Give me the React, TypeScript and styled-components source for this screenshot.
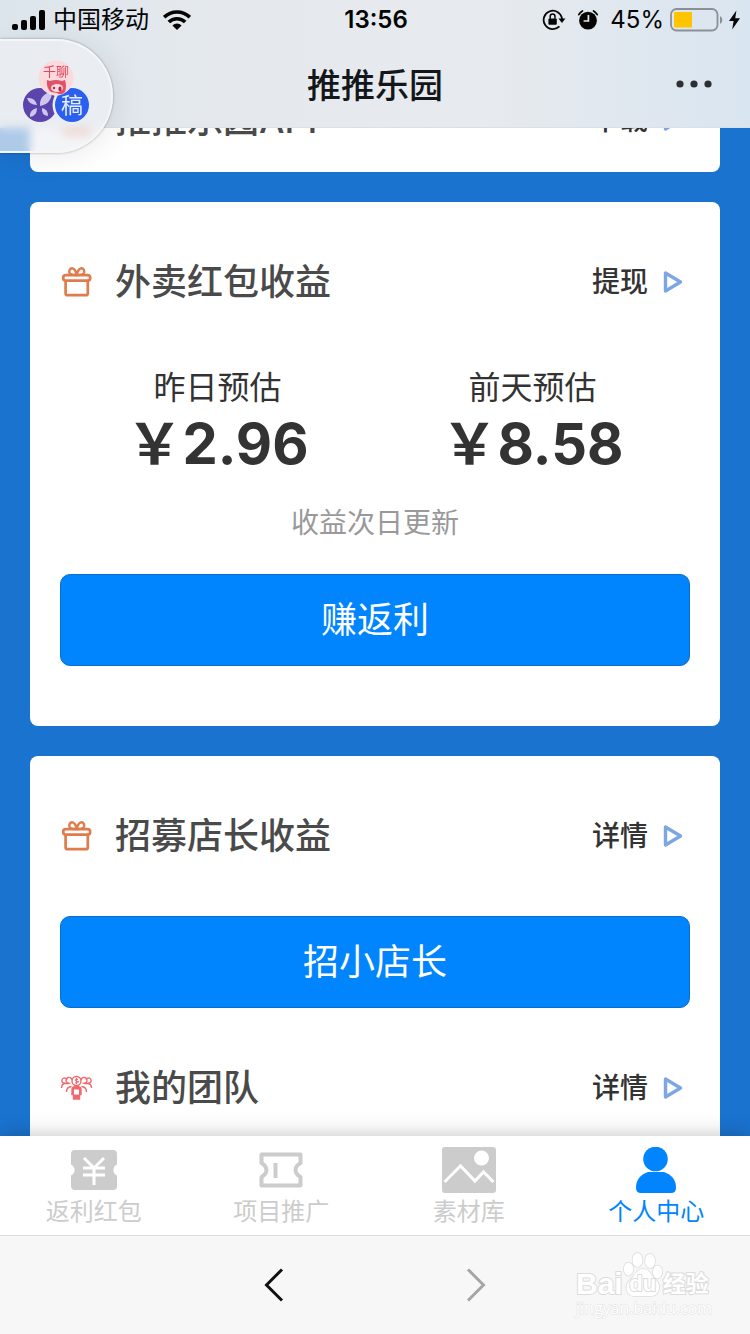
import React from 'react';
import styled, { createGlobalStyle } from 'styled-components';

const latin = '"Inter", "Noto Sans CJK SC", sans-serif';
const cjk = '"Noto Sans CJK SC", sans-serif';

const GlobalStyle = createGlobalStyle`
  *, *::before, *::after { box-sizing: border-box; }
  body { margin: 0; font-family: ${latin}; color: #333; background: #f7f7f7; }
  button { font: inherit; border: 0; padding: 0; background: none; cursor: pointer; }
  a { color: inherit; text-decoration: none; }
  h1, h2, p, dl, dt, dd { margin: 0; font-weight: inherit; }
  svg { display: block; flex: none; }
`;

const Screen = styled.div`
  position: relative;
  display: flex;
  flex-direction: column;
  height: 100vh;
  overflow: hidden;
`;

const Header = styled.header`
  flex: none;
  border-bottom: 1px solid #dcdfe3;
  background: linear-gradient(90deg, #dce5ec 0%, #e5e9ed 30%, #e7eaee 65%, #d9e5f0 100%);
`;

const StatusBar = styled.div`
  display: grid;
  grid-template-columns: 1fr auto 1fr;
  align-items: center;
  height: 40px;
  padding: 0 10px 0 12px;
  font-size: 24px;
  line-height: 40px;
  color: #050505;
`;

const StatusGroup = styled.div<{ $end?: boolean; $gap: number }>`
  display: flex;
  align-items: center;
  justify-content: ${p => (p.$end ? 'flex-end' : 'flex-start')};
  gap: ${p => p.$gap}px;
`;

const Clock = styled.time`
  font-weight: 600;
`;

const TitleBar = styled.div`
  display: grid;
  grid-template-columns: 1fr auto 1fr;
  align-items: center;
  height: 87px;
  padding: 0 38px;
`;

const PageTitle = styled.h1`
  && {
    grid-column: 2;
    font-family: ${cjk};
    font-size: 34px;
    font-weight: 500;
    line-height: 48px;
    color: #14171a;
  }
`;

const MoreButton = styled.button`
  justify-self: end;
`;

const Bubble = styled.button`
  && {
    position: absolute;
    z-index: 2;
    top: 39px;
    left: 0;
    width: 113px;
    height: 114px;
    border: 2px solid #f4f6f8;
    border-left: 0;
    border-radius: 0 57px 57px 0;
    background: rgba(238, 240, 243, 0.7);
    backdrop-filter: blur(4px);
    box-shadow: 0 0 3px rgba(0, 0, 0, 0.35), 4px 4px 30px rgba(0, 0, 0, 0.08);
  }
`;

const Main = styled.main`
  flex: 1;
  min-height: 0;
  overflow: hidden;
  background: #1a73cf;
`;

const Feed = styled.div`
  display: flex;
  flex-direction: column;
  gap: 30px;
  margin-top: -88px;
  padding: 0 30px;
`;

const Card = styled.section<{ $compact?: boolean }>`
  padding: 30px 30px ${p => (p.$compact ? 2 : 30)}px;
  border-radius: 8px;
  background: #fff;
`;

const Row = styled.div`
  display: flex;
  align-items: center;
  gap: 22px;
  height: 100px;
`;

const RowTitle = styled.h2`
  && {
    flex: 1;
    font-size: 36px;
    font-weight: 500;
    line-height: 48px;
    color: #4a4a4a;
  }
`;

const RowLink = styled.a`
  && {
    display: flex;
    align-items: center;
    gap: 14px;
    padding-right: 6px;
    font-size: 28px;
    font-weight: 500;
    line-height: 40px;
    color: #333;
  }
`;

const Stats = styled.dl`
  && {
    display: grid;
    grid-template-columns: 1fr 1fr;
    padding-top: 30px;
    text-align: center;
  }
`;

const StatLabel = styled.dt`
  font-family: ${cjk};
  font-size: 32px;
  line-height: 46px;
`;

const StatValue = styled.dd`
  && {
    font-size: 56px;
    font-weight: 700;
    line-height: 72px;
  }
`;

const Yen = styled.span`
  font-family: ${cjk};
  line-height: 1;
`;

const Hint = styled.p`
  && {
    padding-top: 22px;
    font-size: 28px;
    line-height: 42px;
    text-align: center;
    color: #999;
  }
`;

const PrimaryButton = styled.button`
  && {
    display: block;
    width: 100%;
    height: 92px;
    margin: 30px 0;
    border: 1px solid #0a6fcb;
    border-radius: 10px;
    background: #0085ff;
    color: #fff;
    font-size: 36px;
    line-height: 48px;
  }
`;

const TabBar = styled.nav`
  position: relative;
  z-index: 1;
  flex: none;
  display: grid;
  grid-template-columns: repeat(4, 1fr);
  height: 100px;
  border-bottom: 1px solid #dedede;
  background: #fff;
  box-shadow: 0 0 20px rgba(0, 0, 0, 0.25);
`;

const Tab = styled.a<{ $active?: boolean }>`
  && {
    display: flex;
    flex-direction: column;
    align-items: center;
    padding-top: 10px;
    font-size: 24px;
    line-height: 32px;
    color: ${p => (p.$active ? '#0085ff' : '#ccc')};
  }
`;

const TabIcon = styled.span`
  display: flex;
  align-items: center;
  height: 48px;
  margin-bottom: 2px;
`;

const BrowserBar = styled.footer`
  position: relative;
  z-index: 1;
  flex: none;
  display: flex;
  justify-content: center;
  align-items: center;
  gap: 182px;
  height: 98px;
  background: #f7f7f7;
`;

const Watermark = styled.div`
  position: absolute;
  right: 38px;
  bottom: 16px;
  width: 136px;
  font-family: "Liberation Sans", ${cjk};
  color: #fff;
  -webkit-text-stroke: 2px #dcdcdc;
  paint-order: stroke fill;
`;

const WatermarkBrand = styled.div`
  display: flex;
  align-items: flex-end;
  font-size: 30px;
  font-weight: 700;
  line-height: 28px;
`;

const PawMark = styled.span`
  position: relative;
  width: 40px;
  height: 46px;
`;

const PawText = styled.span`
  position: absolute;
  inset: auto 0 0;
  font-size: 22px;
  text-align: center;
`;

const BrandCjk = styled.span`
  font-size: 23px;
`;

const WatermarkSite = styled.div`
  font-family: "Open Sans", sans-serif;
  font-size: 16px;
  line-height: 20px;
  -webkit-text-stroke: 1px #e0e0e0;
`;

const SignalIcon = () => (
  <svg width="34" height="20" viewBox="0 0 34 20" fill="#050505">
    <rect x="0" y="14" width="6" height="6" rx="2" />
    <rect x="9" y="10" width="6" height="10" rx="2" />
    <rect x="18" y="6" width="6" height="14" rx="2" />
    <rect x="27" y="0" width="6" height="20" rx="2" />
  </svg>
);

const WifiIcon = () => (
  <svg width="28" height="20" viewBox="0 0 28 20">
    <g fill="none" stroke="#050505" strokeWidth="3.6">
      <path d="M1.2 7.2a18.2 18.2 0 0 1 25.6 0" />
      <path d="M5.8 12a11.8 11.8 0 0 1 16.4 0" />
    </g>
    <path d="M9.4 15.4a6.8 6.8 0 0 1 9.2 0L14 20z" fill="#050505" />
  </svg>
);

const RotationLockIcon = () => (
  <svg width="24" height="22" viewBox="0 0 24 22">
    <path d="M17.4 17.4A9.2 9.2 0 1 1 20 10" fill="none" stroke="#050505" strokeWidth="1.8" />
    <path d="M16.4 9.4h7L20 14z" fill="#050505" />
    <rect x="6.4" y="9.4" width="8.4" height="6.4" rx="1" fill="#050505" />
    <path d="M8.2 9.8V7.4a2.4 2.4 0 0 1 4.8 0v2.4" fill="none" stroke="#050505" strokeWidth="1.5" />
  </svg>
);

const AlarmIcon = () => (
  <svg width="20" height="20" viewBox="0 0 20 20">
    <circle cx="10" cy="10.6" r="8.9" fill="#050505" />
    <path d="M10.4 5v6H5.6" fill="none" stroke="#e6eaee" strokeWidth="1.7" />
    <path d="M.8 4.6A10 10 0 0 1 4.400 1M15.600 1a10 10 0 0 1 3.600 3.600" fill="none" stroke="#050505" strokeWidth="1.8" strokeLinecap="round" />
  </svg>
);

const BatteryIcon = () => (
  <svg width="53" height="24" viewBox="0 0 53 24">
    <rect x="1" y="1" width="46.5" height="21.5" rx="5.5" fill="none" stroke="#8b9095" strokeWidth="1.8" />
    <rect x="4" y="4" width="18" height="15.5" rx="1" fill="#ffc400" />
    <path d="M50 8.200c3 1 3 6.600 0 7.600z" fill="#8b9095" />
  </svg>
);

const BoltIcon = () => (
  <svg width="11" height="20" viewBox="0 0 11 20">
    <path d="M7.4.5 0 11h4.600L3.200 19.500 11 8.200H6.200z" fill="#050505" />
  </svg>
);

const MoreIcon = () => (
  <svg width="36" height="8" viewBox="0 0 36 8" fill="#2c2f33">
    <circle cx="4" cy="4" r="3.6" />
    <circle cx="18" cy="4" r="3.6" />
    <circle cx="32" cy="4" r="3.6" />
  </svg>
);

const BubbleText = styled.text`
  font-family: ${cjk};
  font-weight: 400;
`;

const AppsIcon = () => (
  <svg width="111" height="110" viewBox="0 0 111 110">
    <circle cx="40" cy="64" r="17" fill="#5b45ad" />
    <g fill="#cfc6f0">
      <path d="M40 65q-1-11 12-15 0 13-12 15z" />
      <path d="M37 64q-8 0-10-7 8-1 10 7z" />
      <path d="M37 67q0 8-7 9-1-7 7-9z" />
      <path d="M42 67q6 1 6 8-7-1-6-8z" />
    </g>
    <circle cx="72" cy="64" r="19.5" fill="#eaedf1" />
    <circle cx="72" cy="64" r="17" fill="#2b5ff0" />
    <circle cx="56" cy="37" r="17.5" fill="#fbd9dc" />
    <path d="M47 39l3 1q6-2 12 0l3-1q2 6 0 12-4 4-8 1l-6-1q-5-4-4-12z" fill="#e0526a" />
    <ellipse cx="57" cy="47" rx="6" ry="4" fill="#fbd9dc" />
    <circle cx="54" cy="47" r="1.2" fill="#b02c46" />
    <ellipse cx="60" cy="48" rx="1.6" ry="2.4" fill="#b02c46" />
    <BubbleText x="56" y="35" fontSize="13" textAnchor="middle" fill="#e0475f">千聊</BubbleText>
    <BubbleText x="72" y="72" fontSize="22" textAnchor="middle" fill="#e6edff">稿</BubbleText>
  </svg>
);

const GiftIcon = () => (
  <svg width="33" height="32" viewBox="0 0 33 32" fill="none" stroke="#e07b4c" strokeWidth="2.7" strokeLinejoin="round">
    <rect x="3.2" y="9.2" width="27" height="5.5" rx="2.700" />
    <path d="M5.600 15v12.200q0 2 2 2h18.200q2 0 2-2V15" />
    <path d="M16.700 9q-6.400.4-7.400-2.700C8.800 3.500 11.200 1.500 13.400 2.700q2.400 1.400 3.300 6.300 1-4.900 3.400-6.300c2.200-1.200 4.600.8 4.100 3.600q-1 3.100-7.500 2.700z" strokeWidth="2.400" />
  </svg>
);

const TeamIcon = () => (
  <svg width="33" height="32" viewBox="0 0 33 32" fill="none" stroke="#f0696c" strokeWidth="1.4">
    <path d="M12 8a3 3 0 1 0-1.500 3M7 8a2.600 2.600 0 1 0-1.500 3M21 8a3 3 0 1 1 1.500 3M26 8a2.600 2.600 0 1 1 1.500 3" />
    <path d="M1.500 16q0-4.500 4-4.500h3M6.500 20q0-5 5-5.500M31.500 16q0-4.500-4-4.500h-3M26.500 20q0-5-5-5.500" />
    <circle cx="16.500" cy="9" r="4.500" />
    <path d="M18 7.500q-3-1-3 .5t3 1.500-3 1.500M16.500 6v6" strokeWidth="1" />
    <path d="M12 17.500q0-3 4.500-3t4.500 3v5h-1.500V27h-6v-4.500H12z" fill="#f0696c" />
    <rect x="14" y="17.500" width="5" height="5" fill="#fff" stroke="none" />
  </svg>
);

const AppIcon = () => (
  <svg width="33" height="32" viewBox="0 0 33 32">
    <rect x="2" width="29" height="32" rx="4" fill="#f2a283" />
  </svg>
);

const TriangleIcon = () => (
  <svg width="22" height="24" viewBox="0 0 22 24" fill="none" stroke="#7ea6e4" strokeWidth="3.4" strokeLinejoin="round">
    <path d="M3.500 3v18L18.500 12z" />
  </svg>
);

const CouponIcon = () => (
  <svg width="46" height="40" viewBox="0 0 46 40">
    <path d="M4 0h38q4 0 4 4v10.500a6 6 0 0 0 0 11V36q0 4-4 4H4q-4 0-4-4V25.500a6 6 0 0 0 0-11V4q0-4 4-4z" fill="#ccc" />
    <path d="M13 8l10 10L33 8M12 18h22M12 25h22M23 18v17" fill="none" stroke="#fff" strokeWidth="3" />
  </svg>
);

const TicketIcon = () => (
  <svg width="44" height="36" viewBox="0 0 44 36" fill="none" stroke="#ccc">
    <path d="M2.500 2.500h39V11q-5 3-5 7t5 7v8.500h-39V25q5-3 5-7t-5-7z" strokeWidth="4" strokeLinejoin="round" />
    <path d="M16.500 11v15" strokeWidth="4" />
  </svg>
);

const ImageIcon = () => (
  <svg width="54" height="46" viewBox="0 0 54 46">
    <rect width="54" height="46" rx="3" fill="#ccc" />
    <circle cx="39.500" cy="11" r="7.500" fill="#fff" />
    <path d="M2.500 35 18.500 19 33 34l8.500-9L51.500 35" fill="none" stroke="#fff" strokeWidth="3" />
  </svg>
);

const PersonIcon = () => (
  <svg width="40" height="46" viewBox="0 0 40 46" fill="#0085ff">
    <circle cx="19.500" cy="12" r="12.300" />
    <path d="M12 25h16q12 4 12 16 0 5-5 5H5q-5 0-5-5 0-12 12-16z" />
  </svg>
);

const Chevron = ({ back }: { back?: boolean }) => (
  <svg width="20" height="34" viewBox="0 0 20 34" fill="none" stroke={back ? '#111' : '#a5a5a5'} strokeWidth="3">
    <path d={back ? 'M18 1.500 2.500 17 18 32.500' : 'M2 1.500 17.500 17 2 32.500'} />
  </svg>
);

const PawIcon = () => (
  <svg width="40" height="46" viewBox="0 0 40 46" fill="#fff" stroke="#dcdcdc" strokeWidth="1.500">
    <ellipse cx="5.500" cy="17" rx="4.700" ry="6.500" />
    <ellipse cx="14.500" cy="8" rx="5" ry="7" />
    <ellipse cx="27" cy="9" rx="5" ry="7" />
    <ellipse cx="34.500" cy="20" rx="4.700" ry="6.500" />
    <path d="M20 17c7 0 8 7 13 11 6 5 3 16-5 16H11c-8 0-10-11-4-16 5-4 6-11 13-11z" />
  </svg>
);

const rowIcons = { app: AppIcon, gift: GiftIcon, team: TeamIcon };

type RowProps = { icon: keyof typeof rowIcons; title: string; action: string };

const SectionRow = ({ icon, title, action }: RowProps) => {
  const Icon = rowIcons[icon];
  return (
    <Row>
      <Icon />
      <RowTitle>{title}</RowTitle>
      <RowLink href="#">
        {action}
        <TriangleIcon />
      </RowLink>
    </Row>
  );
};

const stats = [
  { label: '昨日预估', value: '2.96' },
  { label: '前天预估', value: '8.58' },
];

const tabs = [
  { label: '返利红包', icon: <CouponIcon /> },
  { label: '项目推广', icon: <TicketIcon /> },
  { label: '素材库', icon: <ImageIcon /> },
  { label: '个人中心', icon: <PersonIcon />, active: true },
];

export default function App() {
  return (
    <Screen>
      <GlobalStyle />
      <Header>
        <StatusBar>
          <StatusGroup $gap={7}>
            <SignalIcon />
            <StatusGroup $gap={14}>
              <span>中国移动</span>
              <WifiIcon />
            </StatusGroup>
          </StatusGroup>
          <Clock>13:56</Clock>
          <StatusGroup $end $gap={6}>
            <StatusGroup $gap={12}>
              <RotationLockIcon />
              <AlarmIcon />
              <span>45%</span>
            </StatusGroup>
            <BatteryIcon />
            <BoltIcon />
          </StatusGroup>
        </StatusBar>
        <TitleBar>
          <PageTitle>推推乐园</PageTitle>
          <MoreButton aria-label="更多">
            <MoreIcon />
          </MoreButton>
        </TitleBar>
      </Header>

      <Bubble aria-label="浮窗">
        <AppsIcon />
      </Bubble>

      <Main>
        <Feed>
          <Card $compact>
            <SectionRow icon="app" title="推推乐园APP" action="下载" />
          </Card>
          <Card>
            <SectionRow icon="gift" title="外卖红包收益" action="提现" />
            <Stats>
              {stats.map(s => (
                <div key={s.label}>
                  <StatLabel>{s.label}</StatLabel>
                  <StatValue>
                    <Yen>￥</Yen>
                    {s.value}
                  </StatValue>
                </div>
              ))}
            </Stats>
            <Hint>收益次日更新</Hint>
            <PrimaryButton>赚返利</PrimaryButton>
          </Card>
          <Card>
            <SectionRow icon="gift" title="招募店长收益" action="详情" />
            <PrimaryButton>招小店长</PrimaryButton>
            <SectionRow icon="team" title="我的团队" action="详情" />
          </Card>
        </Feed>
      </Main>

      <TabBar>
        {tabs.map(t => (
          <Tab key={t.label} href="#" $active={t.active}>
            <TabIcon>{t.icon}</TabIcon>
            {t.label}
          </Tab>
        ))}
      </TabBar>

      <BrowserBar>
        <button aria-label="后退">
          <Chevron back />
        </button>
        <button aria-label="前进">
          <Chevron />
        </button>
        <Watermark>
          <WatermarkBrand>
            <span>Bai</span>
            <PawMark>
              <PawIcon />
              <PawText>du</PawText>
            </PawMark>
            <BrandCjk>经验</BrandCjk>
          </WatermarkBrand>
          <WatermarkSite>jingyan.baidu.com</WatermarkSite>
        </Watermark>
      </BrowserBar>
    </Screen>
  );
}
